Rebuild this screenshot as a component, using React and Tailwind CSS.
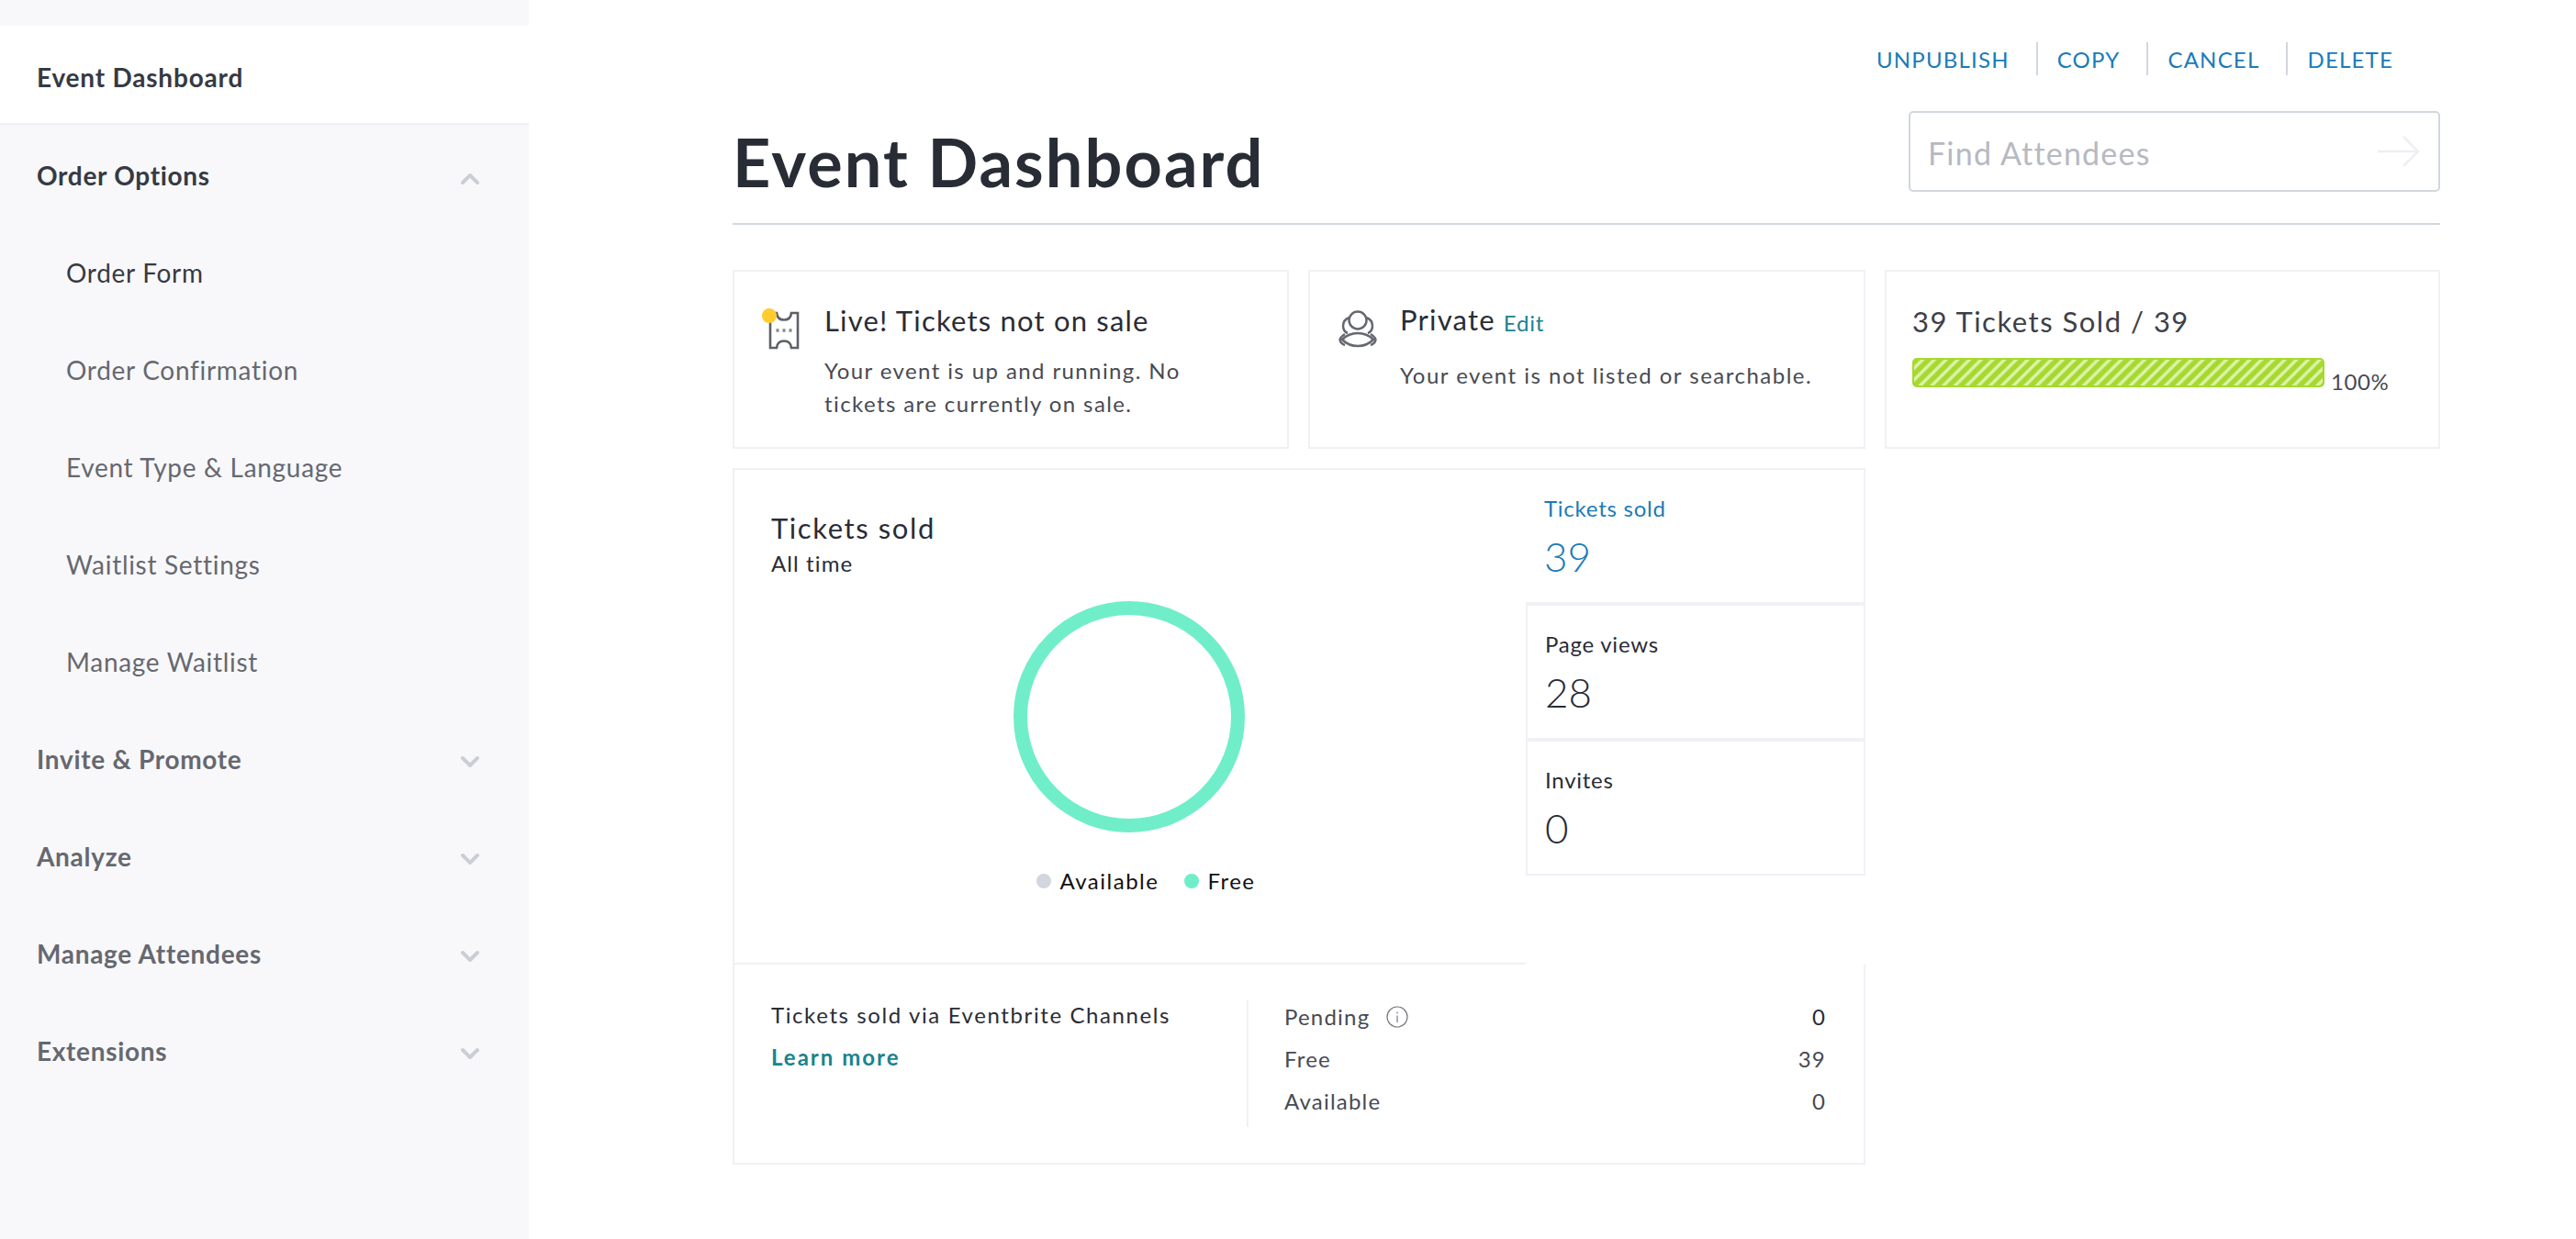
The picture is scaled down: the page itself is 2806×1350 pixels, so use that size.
import React from 'react';
import { ChevronDown, ChevronUp } from 'lucide-react';

const subItems = ['Order Form', 'Order Confirmation', 'Event Type & Language', 'Waitlist Settings', 'Manage Waitlist'];
const groups = ['Invite & Promote', 'Analyze', 'Manage Attendees', 'Extensions'];
const actions = ['UNPUBLISH', 'COPY', 'CANCEL', 'DELETE'];

function TicketIcon() {
  return (
    <svg viewBox="0 0 34 42" className="w-[34px] h-[42px]" fill="none" stroke="#5f6169" strokeWidth="2.6">
      <path d="M2 2H9C9.5 7 12.5 9.5 17 9.5C21.5 9.5 24.5 7 25 2H32V40H25C24.5 35 21.5 32.5 17 32.5C12.5 32.5 9.5 35 9 40H2Z" />
      <path d="M8.5 21H25.5" strokeDasharray="3 4" strokeWidth="3.5" stroke="#85878f" />
    </svg>
  );
}

function PrivateIcon() {
  return (
    <svg viewBox="0 0 42 44" className="w-[42px] h-[44px]" fill="none" stroke="#66686f" strokeWidth="2.5">
      <circle cx="21" cy="12" r="9.5" />
      <path d="M12 9C7.5 10.5 5 14 5 18C5 22 7.5 25 10 26" />
      <path d="M30 9C34.5 10.5 37 14 37 18C37 22 34.5 25 32 26" />
      <path d="M4 33C9 28 15 26 21 26C27 26 33 28 38 33C33 38 27 40 21 40C15 40 9 38 4 33Z" />
      <path d="M7 27C4 29 2 31 1.5 33C2 36 4 38 7 39" />
      <path d="M35 27C38 29 40 31 40.5 33C40 36 38 38 35 39" />
    </svg>
  );
}

function StatBox({ label, value, active, withLeft }) {
  return (
    <div className={`h-[148px] border-2 border-[#eff1f5] pt-[27px] ${withLeft ? 'pl-[19px]' : 'border-l-0 pl-[20px]'} ${active ? 'text-[#1a7bb8]' : 'text-[#2a2c35]'}`}>
      <div className="text-[24px] leading-[30px] tracking-[0.75px]">{label}</div>
      <div className="text-[44px] leading-[54px] font-light mt-[10px]">{value}</div>
    </div>
  );
}

export default function App() {
  return (
    <div className="flex min-h-[1350px] bg-white font-[Lato,sans-serif] text-[#2a2c35]">
      <aside className="w-[576px] shrink-0 bg-[#f8f8fa] pt-[28px]">
        <div className="h-[108px] bg-white border-b-2 border-[#f0f1f4] pl-[40px] pt-[6px] flex items-center text-[28px] tracking-[0.8px] font-bold text-[#363a43]">Event Dashboard</div>
        <nav className="mt-[2px] tracking-[0.7px]">
          <div className="h-[106px] flex items-center justify-between pl-[40px] pr-[48px] text-[28px] font-bold text-[#363a43]">
            <span>Order Options</span>
            <ChevronUp size={32} strokeWidth={3} className="text-[#ccced6] mt-[8px]" />
          </div>
          {subItems.map((item, i) => (
            <div key={item} className={`h-[106px] flex items-center pl-[72px] text-[28px] ${i === 0 ? 'text-[#363a43]' : 'text-[#666870]'}`}>{item}</div>
          ))}
          {groups.map((item) => (
            <div key={item} className="h-[106px] flex items-center justify-between pl-[40px] pr-[48px] text-[28px] font-bold text-[#666870]">
              <span>{item}</span>
              <ChevronDown size={32} strokeWidth={3} className="text-[#ccced6] mt-[6px]" />
            </div>
          ))}
        </nav>
      </aside>

      <main className="w-[2082px] pl-[222px]">
        <div className="w-[1860px]">
          <div className="flex justify-end pr-[51px] pt-[46px] h-[82px]">
            {actions.map((a, i) => (
              <div key={a} className={`h-[36px] flex items-center pt-[2px] text-[24px] tracking-[1.2px] text-[#1a7bb8] ${i > 0 ? 'border-l-2 border-[#d2d6df] ml-[29px] pl-[21px]' : ''}`}>{a}</div>
            ))}
          </div>

          <div className="flex justify-between items-end h-[163px] border-b-2 border-[#d2d6df] pb-[34px]">
            <h1 className="text-[72px] leading-[80px] font-bold text-[#282c35] tracking-[2.1px] -mb-[7px]">Event Dashboard</h1>
            <div className="w-[579px] h-[88px] border-2 border-[#d2d6df] rounded-[5px] flex items-center justify-between pl-[19px] pr-[20px] text-[34px] tracking-[1.2px] text-[#b7b9c2]">
              <span className="pt-[2px]">Find Attendees</span>
              <svg viewBox="0 0 46 34" className="w-[46px] h-[34px]" fill="none" stroke="#eeeff3" strokeWidth="2.5">
                <path d="M0 17H44M28 1L44 17L28 33" />
              </svg>
            </div>
          </div>

          <div className="grid grid-cols-[606px_607px_1fr] gap-[21px] mt-[49px]">
            <div className="relative h-[195px] border-2 border-[#eff1f5] flex pl-[37px] pt-[43px]">
              <TicketIcon />
              <span className="absolute left-[30px] top-[40px] w-[16px] h-[16px] rounded-full bg-[#ffcb2e]" />
              <div className="ml-[27px] -mt-[9px]">
                <div className="text-[31px] leading-[38px] tracking-[1.2px]">Live! Tickets not on sale</div>
                <div className="text-[24px] leading-[36px] mt-[18px] text-[#484a52] tracking-[1.4px]">Your event is up and running. No<br />tickets are currently on sale.</div>
              </div>
            </div>
            <div className="h-[195px] border-2 border-[#eff1f5] flex pl-[31px] pt-[41px]">
              <PrivateIcon />
              <div className="ml-[25px] -mt-[8px]">
                <div className="text-[31px] leading-[38px] tracking-[1.2px]">Private <span className="text-[24px] text-[#1a838f] tracking-[0.8px] relative top-[1px]">Edit</span></div>
                <div className="text-[24px] leading-[36px] mt-[21px] text-[#484a52] tracking-[1.5px]">Your event is not listed or searchable.</div>
              </div>
            </div>
            <div className="h-[195px] border-2 border-[#eff1f5] pl-[28px] pt-[35px]">
              <div className="text-[31px] leading-[38px] tracking-[1.5px] text-[#3e4049]">39 Tickets Sold / 39</div>
              <div className="flex mt-[21px]">
                <div className="w-[449px] h-[32px] rounded-[5px] border-2 border-[#a6d92f] bg-[repeating-linear-gradient(135deg,#a6d92f_0,#a6d92f_4px,#dcf2a8_5.5px,#dcf2a8_7.5px,#a6d92f_9px)]" />
                <span className="ml-[7px] text-[24px] leading-[28px] mt-[12px] tracking-[0.6px] text-[#484a52]">100%</span>
              </div>
            </div>
          </div>

          <div className="w-[1234px] mt-[21px]">
            <div className="flex h-[541px]">
              <div className="flex-1 border-t-2 border-l-2 border-b-2 border-[#eff1f5] pl-[40px] pt-[44px]">
                <div className="text-[31px] leading-[38px] tracking-[1.6px]">Tickets sold</div>
                <div className="text-[24px] leading-[32px] mt-[4px] tracking-[1.1px]">All time</div>
                <div className="flex justify-center mr-[39px] mt-[25px] pr-[3px]">
                  <svg viewBox="0 0 252 252" className="w-[252px] h-[252px]">
                    <circle cx="126" cy="126" r="118.5" fill="none" stroke="#70eec9" strokeWidth="15" />
                  </svg>
                </div>
                <div className="flex justify-center items-center mt-[38px] mr-[5px] text-[24px] leading-[30px] text-[#111] tracking-[1.5px]">
                  <span className="w-[16px] h-[16px] rounded-full bg-[#d2d6df] mr-[9px]" />
                  <span>Available</span>
                  <span className="w-[16px] h-[16px] rounded-full bg-[#70eec9] ml-[28px] mr-[9px]" />
                  <span>Free</span>
                </div>
              </div>
              <div className="w-[370px]">
                <StatBox label="Tickets sold" value="39" active />
                <StatBox label="Page views" value="28" withLeft />
                <StatBox label="Invites" value="0" withLeft />
              </div>
            </div>

            <div className="h-[218px] flex border-l-2 border-r-2 border-b-2 border-[#eff1f5] pl-[40px] pr-[41px] pt-[39px]">
              <div className="w-[518px]">
                <div className="text-[24px] leading-[40px] tracking-[1.6px] -mt-[4px]">Tickets sold via Eventbrite Channels</div>
                <div className="text-[24px] leading-[40px] mt-[6px] font-bold text-[#1a838f] tracking-[2px]">Learn more</div>
              </div>
              <div className="flex-1 h-[138px] border-l-2 border-[#eff1f5] pl-[39px] text-[24px] leading-[46px] text-[#484a52] tracking-[1.2px]">
                <div className="-mt-[5px]">
                  <div className="flex justify-between">
                    <span className="flex items-center">
                      Pending
                      <svg viewBox="0 0 24 24" className="w-[24px] h-[24px] ml-[18px]" fill="none" stroke="#777982" strokeWidth="1.2">
                        <circle cx="12" cy="12" r="11" />
                        <path d="M12 10.5V18M12 6.5V8.5" />
                      </svg>
                    </span>
                    <span className="text-[#2a2c35]">0</span>
                  </div>
                  <div className="flex justify-between"><span>Free</span><span>39</span></div>
                  <div className="flex justify-between"><span>Available</span><span>0</span></div>
                </div>
              </div>
            </div>
          </div>
        </div>
      </main>
    </div>
  );
}
